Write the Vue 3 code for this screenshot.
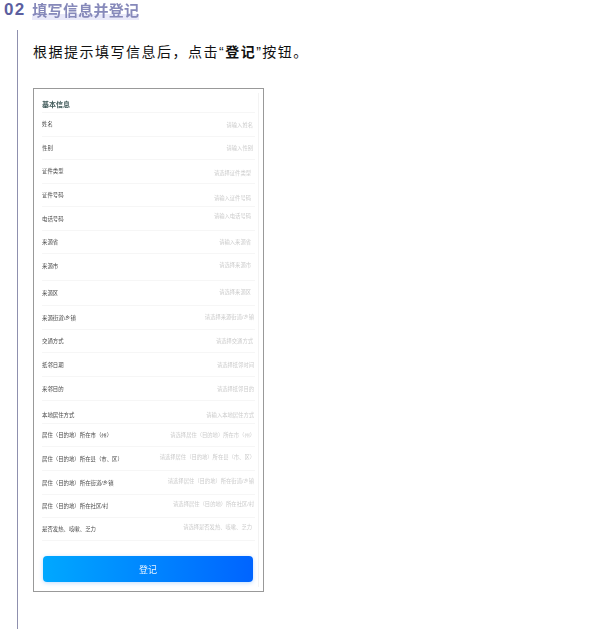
<script setup>
const rows = [
  { h: 24, l: '姓名', p: '请输入姓名', r: 2, d: 0, ld: -0.5 },
  { h: 23, l: '性别', p: '请输入性别', r: 2, d: 0, ld: 0 },
  { h: 24, l: '证件类型', p: '请选择证件类型', r: 4, d: 1.5, ld: -1 },
  { h: 23, l: '证件号码', p: '请输入证件号码', r: 4, d: 2.5, ld: 0 },
  { h: 24, l: '电话号码', p: '请输入电话号码', r: 4, d: -2.5, ld: 0 },
  { h: 23, l: '来源省', p: '请输入来源省', r: 4, d: 0, ld: 0 },
  { h: 27, l: '来源市', p: '请选择来源市', r: 4, d: -2, ld: -1 },
  { h: 25, l: '来源区', p: '请选择来源区', r: 4, d: -1, ld: 0 },
  { h: 24, l: '来源街道\\乡镇', p: '请选择来源街道/乡镇', r: 1, d: -0.5, ld: 0 },
  { h: 23, l: '交通方式', p: '请选择交通方式', r: 2, d: 0, ld: 0 },
  { h: 24, l: '抵邻日期', p: '请选择抵邻时间', r: 1, d: 0, ld: 0 },
  { h: 24, l: '来邻目的', p: '请选择抵邻目的', r: 1, d: 0, ld: 0 },
  { h: 23, l: '本地居住方式', p: '请输入本地居住方式', r: 1, d: 3, ld: 3 },
  { h: 23, l: '居住（目的地）所在市（州）', p: '请选择居住（目的地）所在市（州）', r: 0, d: 0, ld: 0 },
  { h: 24, l: '居住（目的地）所在县（市、区）', p: '请选择居住（目的地）所在县（市、区）', r: 0, d: -2, ld: 0 },
  { h: 24, l: '居住（目的地）所在街道/乡镇', p: '请选择居住（目的地）所在街道/乡镇', r: 1, d: -2, ld: 0 },
  { h: 23, l: '居住（目的地）所在社区/村', p: '请选择居住（目的地）所在社区/村', r: 1, d: -2, ld: 0 },
  { h: 24, l: '是否发热、咳嗽、乏力', p: '请选择是否发热、咳嗽、乏力', r: 3, d: -2, ld: 0 },
]
</script>

<template>
  <div class="page">
    <header class="head">
      <span class="num">02</span>
      <h2 class="title">填写信息并登记</h2>
    </header>
    <section class="body">
      <p class="intro">根据提示填写信息后，点击“<b>登记</b>”按钮。</p>
      <div class="phone">
        <div class="shot">
          <h3 class="group">基本信息</h3>
          <div
            v-for="row in rows"
            :key="row.l"
            class="row"
            :style="{ height: row.h + 'px' }"
          >
            <span class="label" :style="{ marginTop: row.ld * 2 + 'px' }">{{ row.l }}</span>
            <span
              class="hint"
              :style="{ marginTop: row.d * 2 + 'px', marginRight: row.r + 'px' }"
            >{{ row.p }}</span>
          </div>
          <button class="submit">登记</button>
        </div>
      </div>
    </section>
  </div>
</template>

<style>
html, body { margin: 0; background: #fff; }
</style>

<style scoped>
.page {
  width: 603px;
  height: 637px;
  overflow: hidden;
  box-sizing: border-box;
  font-family: "Liberation Sans", "Noto Sans CJK SC", sans-serif;
  background: #fff;
}
.head {
  display: flex;
  align-items: flex-start;
  height: 21px;
  padding-left: 4px;
  gap: 7px;
}
.num {
  font-family: "Liberation Sans", sans-serif;
  font-size: 17px;
  line-height: 20px;
  font-weight: 700;
  letter-spacing: 1.2px;
  color: #5c5f9f;
}
.title {
  margin: 3px 0 0;
  font-size: 15px;
  line-height: 15px;
  height: 17px;
  font-weight: 700;
  letter-spacing: 0.3px;
  color: #8689ba;
  background: linear-gradient(#fff 0 65%, #e9e9f9 65% 100%);
  filter: blur(0.3px);
}
.body {
  margin: 9px 0 0 17px;
  height: 599px;
  width: 300px;
  box-sizing: border-box;
  border-left: 1px solid #8f90ae;
  padding: 11px 0 0 15px;
}
.intro {
  margin: 0;
  width: 290px;
  height: 22px;
  font-size: 14px;
  line-height: 22px;
  letter-spacing: 1.5px;
  color: #111;
  white-space: nowrap;
}
.intro b { font-weight: 700; }
.phone {
  margin-top: 25px;
  width: 231px;
  height: 504px;
  box-sizing: border-box;
  border: 1px solid #999;
  overflow: hidden;
}
.shot {
  box-sizing: border-box;
  width: 225px;
  height: 494px;
  margin-top: 4px;
  padding: 0 0 0 8px;
  border-right: 1px solid #f3f3f3;
  filter: blur(0.6px);
}
.group {
  margin: 0;
  height: 19px;
  padding-top: 6px;
  box-sizing: border-box;
  font-size: 7px;
  line-height: 12px;
  font-weight: 700;
  color: #3f5858;
}
.row {
  display: flex;
  justify-content: space-between;
  align-items: center;
  width: 213px;
  border-top: 1px solid #f6f6f6;
  box-sizing: border-box;
  font-size: 5.4px;
}
.row:last-of-type { border-bottom: 1px solid #f6f6f6; }
.label { color: #484848; white-space: nowrap; }
.hint { color: #cbcbcb; white-space: nowrap; font-size: 5.3px; }
.submit {
  display: block;
  width: 210px;
  height: 26px;
  margin: 15px 0 0 1px;
  padding: 0;
  border: 0;
  border-radius: 4px;
  background: linear-gradient(90deg, #00a8ff, #0064ff);
  box-shadow: 0 1px 4px rgba(0, 120, 255, 0.25);
  color: #e6f3ff;
  font-family: inherit;
  font-size: 9px;
}
</style>
